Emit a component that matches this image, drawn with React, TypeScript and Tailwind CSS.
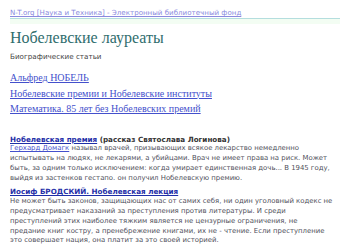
export default function App() {
  const sans = "font-['DejaVu_Sans',Verdana,sans-serif]";
  return (
    <div className="h-[250px] w-[350px] overflow-hidden bg-white">
      <div className="px-[10px] pt-[8px]">
        <a
          href="#"
          className={`${sans} block text-[7.1px] leading-[10px] text-[#8a8ade] underline`}
        >
          N-T.org [Наука и Техника] - Электронный библиотечный фонд
        </a>
        <div className="h-[1px] w-[330px] bg-[#b4dede]" />
        <div className="h-[5px] w-[330px] bg-[#f3fdf3]" />

        <h1 className="mt-[5px] font-['Liberation_Serif',serif] text-[16px] leading-[18px] text-[#2f6d6d]">
          Нобелевские лауреаты
        </h1>
        <p className={`${sans} mt-[5px] text-[7.2px] leading-[10px] text-[#444]`}>
          Биографические статьи
        </p>

        <div className="mt-[8px] flex flex-col font-['Liberation_Serif',serif] text-[10px] leading-[15.5px] text-[#4450cc]">
          <a href="#" className="underline">Альфред НОБЕЛЬ</a>
          <a href="#" className="underline">Нобелевские премии и Нобелевские институты</a>
          <a href="#" className="underline">Математика. 85 лет без Нобелевских премий</a>
        </div>

        <div className={`${sans} mt-[18px] w-[334px] text-[6.9px] leading-[9.8px] text-[#4f4f5a]`}>
          <p className="text-[7.2px] font-bold text-[#333]">
            <a href="#" className="text-[#1f2fa8] underline">Нобелевская премия</a>{" "}
            (рассказ Святослава Логинова)
          </p>
          <p>
            <a href="#" className="text-[#4450cc] underline">Герхард Домагк</a> называл
            врачей, призывающих всякое лекарство немедленно испытывать на людях, не
            лекарями, а убийцами. Врач не имеет права на риск. Может быть, за одним
            только исключением: когда умирает единственная дочь... В 1945 году, выйдя
            из застенков гестапо. он получил Нобелевскую премию.
          </p>

          <p className="mt-[4px] text-[7.2px] font-bold">
            <a href="#" className="text-[#1f2fa8] underline">
              Иосиф БРОДСКИЙ. Нобелевская лекция
            </a>
          </p>
          <p>
            Не может быть законов, защищающих нас от самих себя, ни один уголовный
            кодекс не предусматривает наказаний за преступления против литературы. И
            среди
            <br />
            преступлений этих наиболее тяжким является не цензурные ограничения, не
            <br />
            предание книг костру, а пренебрежение книгами, их не - чтение. Если
            преступление
            <br />
            это совершает нация, она платит за это своей историей.
          </p>
        </div>
      </div>
    </div>
  );
}
